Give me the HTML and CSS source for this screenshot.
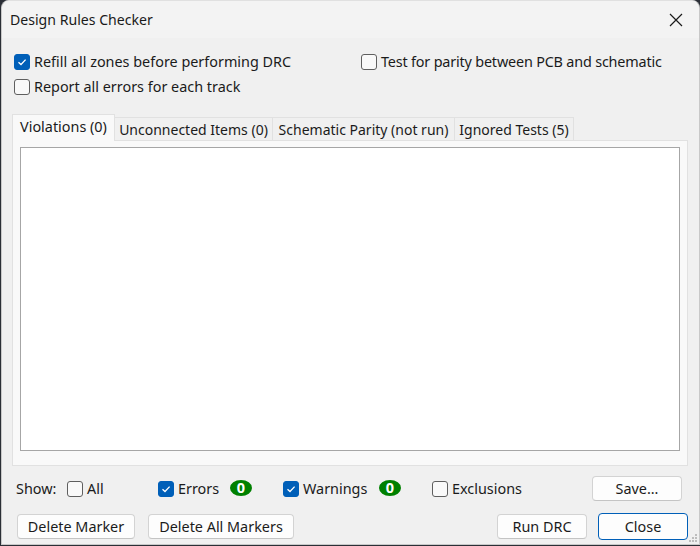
FILE: index.html
```html
<!DOCTYPE html>
<html>
<head>
<meta charset="utf-8">
<link rel="stylesheet" href="styles.css">
</head>
<body>
<div class="window">
  <div class="titlebar">
    <span class="title">Design Rules Checker</span>
    <svg class="close-x" width="14" height="14" viewBox="0 0 14 14"><path d="M1 1 L13 13 M13 1 L1 13" stroke="#1a1a1a" stroke-width="1.2" fill="none"/></svg>
  </div>
  <div class="content">
    <div class="options">
      <label class="cb-row"><span class="cb checked"><svg width="10" height="8" viewBox="0 0 10 8"><path d="M1.5 4.2 L4 6.5 L8.6 1.6" stroke="#fff" stroke-width="1.3" fill="none"/></svg></span>Refill all zones before performing DRC</label>
      <label class="cb-row narrow"><span class="cb"></span>Test for parity between PCB and schematic</label>
      <label class="cb-row"><span class="cb"></span>Report all errors for each track</label>
    </div>
    <div class="notebook">
      <div class="tabs">
        <div class="tab active">Violations (0)</div>
        <div class="tab">Unconnected Items (0)</div>
        <div class="tab">Schematic Parity (not run)</div>
        <div class="tab">Ignored Tests (5)</div>
      </div>
      <div class="panel">
        <div class="list"></div>
      </div>
    </div>
    <div class="show-row">
      <span class="show-label">Show:</span>
      <label class="cb-row all"><span class="cb"></span>All</label>
      <label class="cb-row errors"><span class="cb checked"><svg width="10" height="8" viewBox="0 0 10 8"><path d="M1.5 4.2 L4 6.5 L8.6 1.6" stroke="#fff" stroke-width="1.3" fill="none"/></svg></span>Errors</label>
      <span class="badge">0</span>
      <label class="cb-row warnings"><span class="cb checked"><svg width="10" height="8" viewBox="0 0 10 8"><path d="M1.5 4.2 L4 6.5 L8.6 1.6" stroke="#fff" stroke-width="1.3" fill="none"/></svg></span>Warnings</label>
      <span class="badge">0</span>
      <label class="cb-row exclusions"><span class="cb"></span>Exclusions</label>
      <button class="btn save">Save...</button>
    </div>
    <div class="button-row">
      <button class="btn w118">Delete Marker</button>
      <button class="btn w146">Delete All Markers</button>
      <span class="spacer"></span>
      <button class="btn w90">Run DRC</button>
      <button class="btn w90 default">Close</button>
    </div>
  </div>
  <div class="grip">
    <svg width="10" height="10" viewBox="0 0 10 10" fill="#bdbdbd"><rect x="7" y="1" width="2" height="2"/><rect x="4" y="4" width="2" height="2"/><rect x="7" y="4" width="2" height="2"/><rect x="1" y="7" width="2" height="2"/><rect x="4" y="7" width="2" height="2"/><rect x="7" y="7" width="2" height="2"/></svg>
  </div>
</div>
</body>
</html>
```

FILE: styles.css
```css
* { box-sizing: border-box; }
html, body {
  margin: 0;
  padding: 0;
  background: #2b2f36;
  width: 700px;
  height: 546px;
  overflow: hidden;
}
body {
  font-family: "Noto Sans", "Liberation Sans", sans-serif;
  font-size: 14.4px;
  color: #1b1b1b;
}
.window {
  position: relative;
  width: 699px;
  height: 545px;
  margin-left: 1px;
  background: #f0f0f0;
  border-radius: 8px 8px 0 0;
  border: 1px solid #c8c8c8;
  border-top-color: #e0e0e0;
  display: flex;
  flex-direction: column;
  overflow: hidden;
}
.titlebar {
  height: 37px;
  flex: none;
  background: #f3f3f3;
  display: flex;
  align-items: center;
  justify-content: space-between;
  padding: 0 16px 0 8px;
}
.title {
  font-size: 14.1px;
  color: #1a1a1a;
}
.content {
  flex: 1;
  padding: 0 11px 0 10px;
  display: flex;
  flex-direction: column;
}
.options {
  display: grid;
  grid-template-columns: 347px auto;
  grid-auto-rows: 25px;
  padding-top: 11px;
  padding-left: 2px;
}
.cb-row {
  display: flex;
  align-items: center;
  gap: 4px;
  white-space: nowrap;
}
.narrow { letter-spacing: -0.18px; }
.cb {
  width: 16px;
  height: 16px;
  flex: none;
  border: 1px solid #5f5f5f;
  border-radius: 3px;
  background: #f9f9f9;
  display: flex;
  align-items: center;
  justify-content: center;
}
.cb.checked {
  background: #005fb8;
  border-color: #005fb8;
}
.notebook {
  margin-top: 15px;
  display: flex;
  flex-direction: column;
}
.tabs {
  display: flex;
  align-items: flex-end;
  height: 26px;
  position: relative;
  z-index: 1;
}
.tab {
  height: 23px;
  padding: 0;
  border: 1px solid #e1e1e1;
  border-bottom: none;
  margin-left: -1px;
  background: #f0f0f0;
  display: flex;
  align-items: center;
  justify-content: center;
  white-space: nowrap;
  font-size: 14px;
}
.tab:first-child { margin-left: 0; }
.tab.active {
  height: 27px;
  margin-bottom: -1px;
  background: #f9f9f9;
  padding: 0 0 3px 0;
  font-size: 14.4px;
}
.tabs .tab:nth-child(1) { width: 103px; }
.tabs .tab:nth-child(2) { width: 159px; }
.tabs .tab:nth-child(3) { width: 183px; }
.tabs .tab:nth-child(4) { width: 120px; }
.panel {
  height: 326px;
  background: #f9f9f9;
  border: 1px solid #e1e1e1;
  padding: 6px 7px 14px 7px;
}
.list {
  height: 100%;
  background: #ffffff;
  border: 1px solid #a6a6a6;
}
.show-row {
  display: flex;
  align-items: center;
  height: 45px;
  padding-left: 4px;
}
.show-label { width: 51px; }
.all { width: 91px; }
.errors { width: 72px; }
.warnings { width: 96px; margin-left: 31px; }
.exclusions { margin-left: 31px; }
.badge {
  width: 22px;
  height: 16px;
  border-radius: 50%;
  background: #008000;
  color: #fff;
  font-weight: bold;
  font-size: 14.5px;
  display: flex;
  align-items: center;
  justify-content: center;
  line-height: 1;
  margin-top: -2px;
}
.btn {
  font-family: inherit;
  font-size: 14.4px;
  color: #1b1b1b;
  height: 25px;
  background: #fdfdfd;
  border: 1px solid #d3d3d3;
  border-bottom-color: #c4c4c4;
  border-radius: 4px;
  padding: 0;
}
.save {
  margin-left: auto;
  width: 90px;
  margin-right: 6px;
  margin-top: -1px;
}
.button-row {
  display: flex;
  align-items: center;
  padding-left: 5px;
  padding-top: 2px;
}
.w118 { width: 118px; margin-right: 13px; }
.w146 { width: 146px; }
.w90 { width: 90px; }
.spacer { flex: 1; }
.default {
  margin-left: 11px;
  border: 1.5px solid #005fb8;
  height: 27px;
}
.grip {
  position: absolute;
  right: 1px;
  bottom: 1px;
  line-height: 0;
}
```
